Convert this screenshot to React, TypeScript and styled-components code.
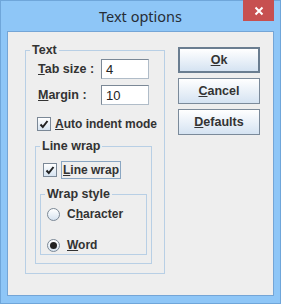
import styled, { createGlobalStyle } from 'styled-components';

const GlobalStyle = createGlobalStyle`
	html, body {
		margin: 0;
		padding: 0;
		background: #8ec6f7;
	}
	* {
		box-sizing: border-box;
	}
`;

const Frame = styled.div`
	width: 281px;
	height: 304px;
	background: #8ec6f7;
	border: 1px solid #6fa6da;
	display: flex;
	flex-direction: column;
	font-family: 'Liberation Sans', Arial, sans-serif;
`;

const TitleBar = styled.div`
	height: 30px;
	position: relative;
	display: flex;
	align-items: center;
	justify-content: center;
	padding-bottom: 1px;
	font-family: 'Noto Sans', 'Open Sans', sans-serif;
	font-size: 14.5px;
	color: #262d36;
`;

const CloseButton = styled.div`
	position: absolute;
	top: -1px;
	right: 6px;
	width: 31px;
	height: 21px;
	background: #c75050;
	display: flex;
	align-items: center;
	justify-content: center;
`;

const Content = styled.div`
	flex: 1;
	margin: 0 6px 7px 6px;
	background: #eeeeee;
	border: 1px solid #74a5d6;
	display: flex;
	align-items: flex-start;
	padding: 11px 0 0 17px;
	gap: 13px;
	color: #333333;
	font-size: 12px;
	font-weight: bold;
	white-space: nowrap;
`;

const Group = styled.fieldset<{ $w: number; $h: number }>`
	width: ${(p) => p.$w}px;
	height: ${(p) => p.$h}px;
	margin: 0;
	padding: 0;
	border: 1px solid #b8cfe5;
	min-width: 0;
	display: flex;
	flex-direction: column;
`;

const Legend = styled.legend`
	margin-left: 4px;
	padding: 0 2px;
	font-size: 12.5px;
	line-height: 15px;
	font-weight: bold;
	color: #333333;
`;

const FieldRow = styled.div<{ $top: number }>`
	display: flex;
	align-items: center;
	margin-top: ${(p) => p.$top}px;
	padding-left: 12px;
	height: 20px;
	font-size: 12.5px;
`;

const Label = styled.span`
	width: 63px;
`;

const Input = styled.div`
	width: 48px;
	height: 20px;
	background: #ffffff;
	border: 1px solid #7b8896;
	border-right-color: #b0bcc8;
	border-bottom-color: #b0bcc8;
	font-weight: normal;
	font-size: 13px;
	padding-left: 4px;
	display: flex;
	align-items: center;
	color: #222;
`;

const CheckRow = styled.div<{ $top: number; $left: number }>`
	display: flex;
	align-items: center;
	gap: 4px;
	margin-top: ${(p) => p.$top}px;
	padding-left: ${(p) => p.$left}px;
	height: 18px;
	font-size: 12px;
`;

const Box = styled.span`
	width: 14px;
	height: 14px;
	border: 1px solid #7b8896;
	background: linear-gradient(#ffffff, #d6e3f0);
	display: flex;
	align-items: center;
	justify-content: center;
`;

const FocusText = styled.span<{ $focus?: boolean }>`
	padding: 1px 1px;
	border: 1px solid ${(p) => (p.$focus ? '#8aa6c2' : 'transparent')};
`;

const Radio = styled.span<{ $on?: boolean }>`
	width: 13px;
	height: 13px;
	border-radius: 50%;
	border: 1px solid #7b8896;
	background: linear-gradient(#ffffff, #d6e3f0);
	display: flex;
	align-items: center;
	justify-content: center;
	margin-right: 3px;
	&::after {
		content: '';
		width: 7px;
		height: 7px;
		border-radius: 50%;
		background: ${(p) => (p.$on ? '#222' : 'transparent')};
	}
`;

const Inner = styled.div<{ $top: number; $left: number }>`
	margin-top: ${(p) => p.$top}px;
	margin-left: ${(p) => p.$left}px;
`;

const Buttons = styled.div`
	display: flex;
	flex-direction: column;
	gap: 5px;
	padding-top: 4px;
`;

const Button = styled.div<{ $default?: boolean }>`
	width: 82px;
	height: 26px;
	border: ${(p) => (p.$default ? '2px solid #6a7d90' : '1px solid #7b8a9a')};
	background: linear-gradient(#ffffff, #d5e3f2);
	display: flex;
	align-items: center;
	justify-content: center;
	font-size: 12.5px;
	font-weight: bold;
	color: #333;
`;

const Check = () => (
	<svg width="10" height="10" viewBox="0 0 10 10">
		<path d="M1.5 5.5 L3.8 8 L8.5 2" stroke="#222" strokeWidth="2" fill="none" />
	</svg>
);

export default function App() {
	return (
		<>
			<GlobalStyle />
			<Frame>
				<TitleBar>
					Text options
					<CloseButton>
						<svg width="10" height="10" viewBox="0 0 10 10">
							<path d="M1.5 1.5 L8.5 8.5 M8.5 1.5 L1.5 8.5" stroke="#fff" strokeWidth="2" />
						</svg>
					</CloseButton>
				</TitleBar>
				<Content>
					<Group $w={140} $h={231}>
						<Legend>Text</Legend>
						<FieldRow $top={1}>
							<Label><u>T</u>ab size :</Label>
							<Input>4</Input>
						</FieldRow>
						<FieldRow $top={6}>
							<Label><u>M</u>argin :</Label>
							<Input>10</Input>
						</FieldRow>
						<CheckRow $top={10} $left={11}>
							<Box><Check /></Box>
							<span><u>A</u>uto indent mode</span>
						</CheckRow>
						<Inner $top={6} $left={9}>
							<Group $w={117} $h={125}>
								<Legend>Line wrap</Legend>
								<CheckRow $top={7} $left={7}>
									<Box><Check /></Box>
									<FocusText $focus><u>L</u>ine wrap</FocusText>
								</CheckRow>
								<Inner $top={8} $left={4}>
									<Group $w={107} $h={68}>
										<Legend>Wrap style</Legend>
										<CheckRow $top={3} $left={6}>
											<Radio />
											<span>C<u>h</u>aracter</span>
										</CheckRow>
										<CheckRow $top={13} $left={6}>
											<Radio $on />
											<span><u>W</u>ord</span>
										</CheckRow>
									</Group>
								</Inner>
							</Group>
						</Inner>
					</Group>
					<Buttons>
						<Button $default><span><u>O</u>k</span></Button>
						<Button><span><u>C</u>ancel</span></Button>
						<Button><span><u>D</u>efaults</span></Button>
					</Buttons>
				</Content>
			</Frame>
		</>
	);
}
